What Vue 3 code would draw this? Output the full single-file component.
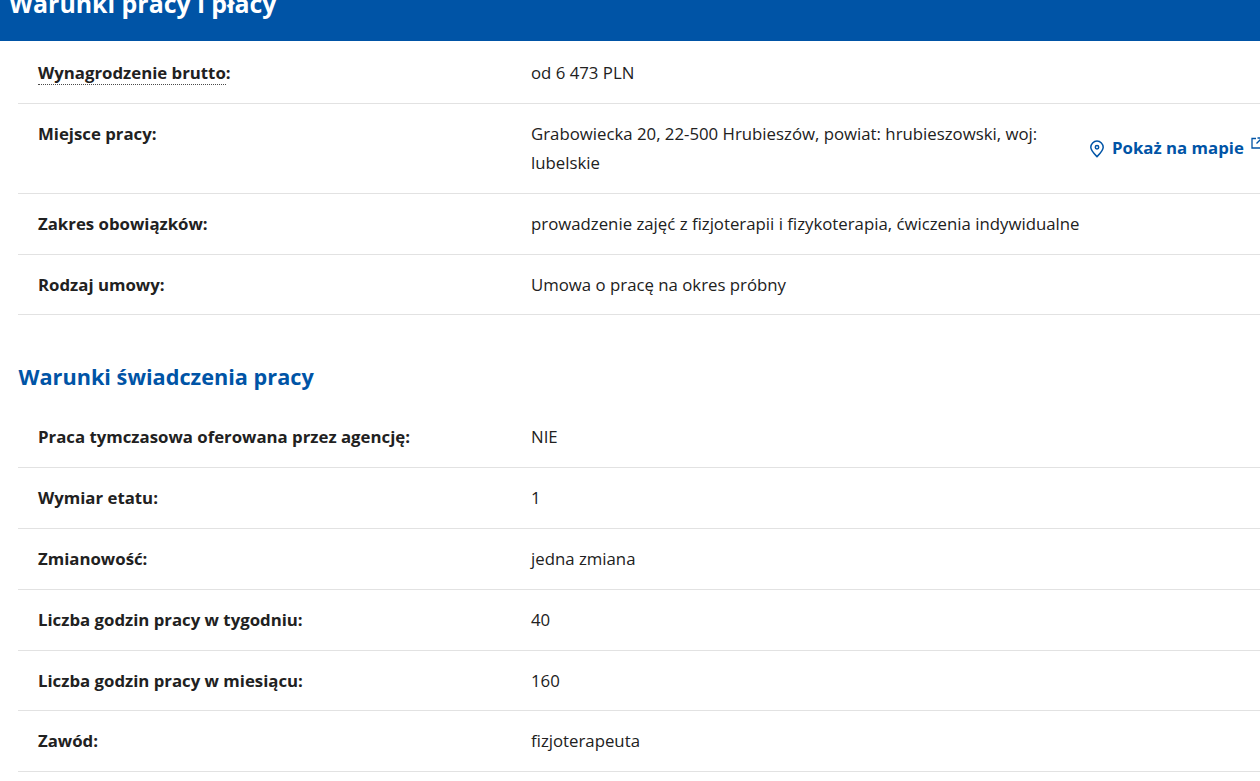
<script setup>
const first = [
  { label: 'Miejsce pracy:', value: 'Grabowiecka 20, 22-500 Hrubieszów, powiat: hrubieszowski, woj: lubelskie', map: true },
  { label: 'Zakres obowiązków:', value: 'prowadzenie zajęć z fizjoterapii i fizykoterapia, ćwiczenia indywidualne' },
  { label: 'Rodzaj umowy:', value: 'Umowa o pracę na okres próbny' }
]
const second = [
  { label: 'Praca tymczasowa oferowana przez agencję:', value: 'NIE' },
  { label: 'Wymiar etatu:', value: '1' },
  { label: 'Zmianowość:', value: 'jedna zmiana' },
  { label: 'Liczba godzin pracy w tygodniu:', value: '40' },
  { label: 'Liczba godzin pracy w miesiącu:', value: '160' },
  { label: 'Zawód:', value: 'fizjoterapeuta' }
]
</script>

<template>
  <div class="page">
    <header class="banner"><h1>Warunki pracy i płacy</h1></header>
    <section class="body">
      <div class="row top">
        <div class="label"><span class="dotted">Wynagrodzenie brutto</span>:</div>
        <div class="value">od 6 473 PLN</div>
      </div>
      <div v-for="r in first" :key="r.label" class="row">
        <div class="label">{{ r.label }}</div>
        <div class="value" :class="{ narrow: r.map }">{{ r.value }}</div>
        <a v-if="r.map" class="map">
          <svg class="pin" width="16" height="18" viewBox="0 0 16 18" fill="none" stroke="currentColor" stroke-width="1.5">
            <path d="M8 16.6C5 13.6 1.800 10.600 1.800 7.300a6.200 6.200 0 0 1 12.400 0c0 3.300-3.200 6.300-6.200 9.300z" />
            <circle cx="8" cy="7.300" r="1.700" />
          </svg>
          <span>Pokaż na mapie</span>
          <svg class="ext" width="12" height="12" viewBox="0 0 12 12" fill="none" stroke="currentColor" stroke-width="1.300">
            <path d="M5 1.500H1v9.500h9.500V7M6.500 1h4.500v4.500M11 1 5.500 6.500" />
          </svg>
        </a>
      </div>
      <h2>Warunki świadczenia pracy</h2>
      <div v-for="r in second" :key="r.label" class="row">
        <div class="label">{{ r.label }}</div>
        <div class="value">{{ r.value }}</div>
      </div>
    </section>
  </div>
</template>

<style>
html, body { margin: 0; overflow: hidden; background: #fff; }
</style>

<style scoped>
.page {
  width: 1260px;
  height: 781px;
  overflow: hidden;
  font-family: "Open Sans", "Noto Sans", sans-serif;
  font-size: 16.8px;
  color: #212121;
}
.banner {
  height: 41px;
  background: #0054a6;
  display: flex;
  align-items: flex-end;
  overflow: hidden;
  padding-left: 9px;
}
h1 {
  margin: 0 0 22px;
  font-size: 24.9px;
  line-height: 32px;
  font-weight: 700;
  color: #fff;
  flex: none;
}
.body { padding-left: 18px; }
.row {
  display: flex;
  align-items: flex-start;
  box-sizing: border-box;
  padding: 16px 0 15px 20px;
  border-bottom: 1px solid #e2e2e2;
  line-height: 28.8px;
}
.row.top { padding-top: 18.4px; }
.label {
  width: 493px;
  flex: none;
  font-weight: 700;
}
.dotted { border-bottom: 1.5px dotted #4a4a4a; }
.value { flex: none; }
.value.narrow { width: 558px; }
.map {
  display: flex;
  align-items: center;
  gap: 7px;
  flex: none;
  margin-top: 14px;
  font-weight: 700;
  color: #0054a6;
}
.pin { flex: none; }
.ext { flex: none; margin: -12px 0 0 0; }
h2 {
  margin: 0;
  padding: 46px 0 14px 0.5px;
  font-size: 21.7px;
  line-height: 32px;
  font-weight: 700;
  color: #0054a6;
}
</style>
